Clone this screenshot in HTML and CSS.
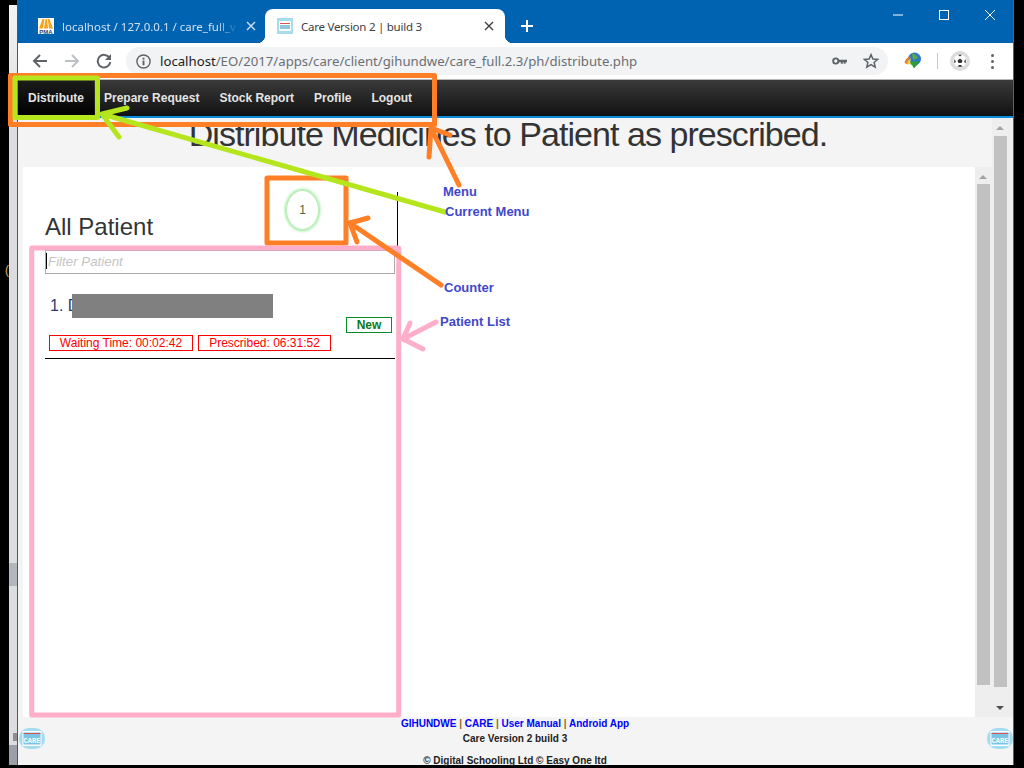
FILE: index.html
```html
<!DOCTYPE html>
<html>
<head>
    <title>Care Version 2 | build 3</title>
    <link rel="stylesheet" href="styles.css">
</head>
<body>
    <div class="desktop">
        <div class="desk-edge">
            <span class="desk-glyph">(</span>
            <div class="edge-strip">
                <div class="edge-block edge-block-a"></div>
                <div class="edge-block edge-block-b"></div>
                <div class="edge-block edge-block-c"></div>
            </div>
        </div>

        <div class="window">
            <div class="tabstrip">
                <div class="tab">
                    <svg class="favicon" viewBox="0 0 16 16">
                        <rect width="16" height="16" fill="#fff"/>
                        <path d="M1 10.5 L4.5 1 L6.5 1 L5 10.5 Z M6 10.5 L7.5 1 L9 1 L10 10.5 Z M11 10.5 L9.8 1 L11.5 1 L15 10.5 Z" fill="#f7a21b"/>
                        <text class="pma-text" x="8" y="15.8">PMA</text>
                    </svg>
                    <span class="tab-title">localhost / 127.0.0.1 / care_full_v</span>
                    <svg class="tab-close" viewBox="0 0 10 10"><path d="M1 1 L9 9 M9 1 L1 9"/></svg>
                </div>
                <div class="tab tab-active">
                    <svg class="favicon" viewBox="0 0 16 16">
                        <rect width="16" height="16" fill="#a6dcec"/>
                        <rect x="2" y="3" width="12" height="10" rx="1" fill="#fff"/>
                        <rect x="3" y="5" width="10" height="1" fill="#d9534f"/>
                        <rect x="3" y="7" width="10" height="4" fill="#8fc6dc"/>
                    </svg>
                    <span class="tab-title">Care Version 2 | build 3</span>
                    <svg class="tab-close" viewBox="0 0 10 10"><path d="M1 1 L9 9 M9 1 L1 9"/></svg>
                </div>
                <svg class="new-tab" viewBox="0 0 12 12"><path d="M6 0 V12 M0 6 H12"/></svg>
                <div class="win-controls">
                    <div class="win-btn"><svg viewBox="0 0 10 10"><path d="M0 5 H10"/></svg></div>
                    <div class="win-btn"><svg viewBox="0 0 10 10"><rect x="0.5" y="0.5" width="9" height="9"/></svg></div>
                    <div class="win-btn"><svg viewBox="0 0 10 10"><path d="M0 0 L10 10 M10 0 L0 10"/></svg></div>
                </div>
            </div>

            <div class="toolbar">
                <div class="tool-btn">
                    <svg viewBox="0 0 16 16"><path class="ico-line" d="M15 8 H2 M8 2 L2 8 L8 14"/></svg>
                </div>
                <div class="tool-btn">
                    <svg viewBox="0 0 16 16"><path class="ico-line ico-off" d="M1 8 H14 M8 2 L14 8 L8 14"/></svg>
                </div>
                <div class="tool-btn">
                    <svg viewBox="0 0 16 16"><path class="ico-line" d="M13.5 5 A6.3 6.3 0 1 0 14.3 9"/><path class="ico-fill" d="M15 1 V7 H9 Z"/></svg>
                </div>
                <div class="omnibox">
                    <svg class="omni-info" viewBox="0 0 16 16">
                        <circle class="ico-line-thin" cx="8" cy="8" r="7"/>
                        <rect class="ico-fill" x="7" y="7" width="2" height="5"/>
                        <rect class="ico-fill" x="7" y="4" width="2" height="2"/>
                    </svg>
                    <span class="url"><span class="url-host">localhost</span>/EO/2017/apps/care/client/gihundwe/care_full.2.3/ph/distribute.php</span>
                    <div class="omni-right">
                        <svg class="omni-key" viewBox="0 0 16 10">
                            <circle class="ico-line-key" cx="4" cy="5" r="2.8"/>
                            <path class="ico-fill" d="M7 3.6 H16 V6.4 H14.5 V8 H12.5 V6.4 H11.5 V8 H9.5 V6.4 H7 Z"/>
                        </svg>
                        <svg class="omni-star" viewBox="0 0 16 16">
                            <path class="ico-line-thin" d="M8 1.6 L9.9 6 L14.7 6.4 L11.1 9.5 L12.2 14.2 L8 11.7 L3.8 14.2 L4.9 9.5 L1.3 6.4 L6.1 6 Z"/>
                        </svg>
                    </div>
                </div>
                <svg class="idm" viewBox="0 0 18 18">
                    <circle cx="10.5" cy="7" r="6.5" fill="#2f76c9"/>
                    <path d="M8 1.5 Q12 2 14 6 L9 8 Z" fill="#5cae3c"/>
                    <path d="M0.5 11 Q1.5 5 7 4.5 Q3 7 4 12.5 Z" fill="#e8832a"/>
                    <path d="M3.5 12 Q3.5 8 7 6 Q5.5 9 7 12.5 Z" fill="#f2d33b"/>
                    <path d="M6 9.5 H16 L10 16.5 Z" fill="#2f9e35"/>
                </svg>
                <div class="tool-sep"></div>
                <svg class="avatar" viewBox="0 0 20 20">
                    <circle cx="10" cy="10" r="10" fill="#dcdcdc"/>
                    <circle cx="10" cy="10" r="6.5" fill="#fff"/>
                    <path d="M10 7.5 L12.5 9.5 L11.5 12 H8.5 L7.5 9.5 Z" fill="#333"/>
                    <path d="M8 3.8 H12 L10 5.5 Z M15.5 8 L16 12 L14 11 Z M4.5 8 L4 12 L6 11 Z M7.5 15.8 L9 14 L11 14 L12.5 15.8 Z" fill="#333"/>
                </svg>
                <div class="tool-dots"><span></span><span></span><span></span></div>
            </div>

            <ul class="nav">
                <li class="nav-active">Distribute</li>
                <li>Prepare Request</li>
                <li>Stock Report</li>
                <li>Profile</li>
                <li>Logout</li>
            </ul>

            <div class="upper">
                <div class="page">
                    <h1>Distribute Medicines to Patient as prescribed.</h1>
                    <div class="panel-row">
                        <div class="panel">
                            <div class="list-col">
                                <div class="list-head">
                                    <h2>All Patient</h2>
                                    <div class="counter">1</div>
                                </div>
                                <div class="filter">Filter Patient</div>
                                <div class="patient">
                                    <div class="patient-name">1. D<span class="redact"></span></div>
                                    <div class="badge-row"><span class="badge-new">New</span></div>
                                    <div class="times">
                                        <span class="time-box time-wait">Waiting Time: 00:02:42</span>
                                        <span class="time-box time-pres">Prescribed: 06:31:52</span>
                                    </div>
                                </div>
                            </div>
                        </div>
                        <div class="scroll scroll-inner">
                            <div class="thumb"></div>
                        </div>
                    </div>
                </div>
                <div class="scroll scroll-outer">
                    <div class="thumb"></div>
                    <div class="arrow-down"></div>
                </div>
            </div>

            <div class="footer">
                <svg class="care-icon" viewBox="0 0 26 21">
                    <rect width="26" height="21" rx="10" fill="#a3dcee"/>
                    <rect x="3.5" y="3" width="19" height="15" fill="#fff"/>
                    <rect x="4.5" y="4.5" width="17" height="12" fill="#7cc4e4"/>
                    <rect x="4.5" y="5" width="17" height="1" fill="#d9534f"/>
                    <text class="care-text" x="13" y="14.8">CARE</text>
                </svg>
                <div class="footer-text">
                    <div class="footer-links"><a>GIHUNDWE</a> | <a>CARE</a> | <a>User Manual</a> | <a>Android App</a></div>
                    <div class="footer-ver">Care Version 2 build 3</div>
                    <div class="footer-copy">© Digital Schooling Ltd © Easy One ltd</div>
                </div>
                <svg class="care-icon" viewBox="0 0 26 21">
                    <rect width="26" height="21" rx="10" fill="#a3dcee"/>
                    <rect x="3.5" y="3" width="19" height="15" fill="#fff"/>
                    <rect x="4.5" y="4.5" width="17" height="12" fill="#7cc4e4"/>
                    <rect x="4.5" y="5" width="17" height="1" fill="#d9534f"/>
                    <text class="care-text" x="13" y="14.8">CARE</text>
                </svg>
            </div>
        </div>

        <!-- paint annotations on top of the screenshot -->
        <svg class="notes" viewBox="0 0 1024 768">
            <rect class="note-orange" x="10.5" y="75.5" width="424" height="49"/>
            <rect class="note-green" x="15" y="78" width="82.5" height="39.5"/>
            <rect class="note-orange" x="267" y="178" width="79" height="65"/>
            <rect class="note-pink" x="31.7" y="248" width="367" height="467"/>
            <path class="note-green" d="M445 212 L102 114 M127 108 L102 114 L119 137"/>
            <path class="note-orange" d="M459 185 L431 128 M450 135 L431 128 L429 157"/>
            <path class="note-orange" d="M441 285 L350 223 M368 218 L350 223 L357 242"/>
            <path class="note-pink" d="M436 322 L403 339 M410 323 L403 339 L423 349"/>
            <text class="note-label" x="443" y="196">Menu</text>
            <text class="note-label" x="445" y="216">Current Menu</text>
            <text class="note-label" x="444" y="292">Counter</text>
            <text class="note-label" x="440" y="326">Patient List</text>
        </svg>
    </div>
</body>
</html>
```

FILE: styles.css
```css
html, body {
    margin: 0;
    padding: 0;
    background: #000;
}
.desktop {
    position: relative;
    display: flex;
    width: 1024px;
    height: 768px;
    overflow: hidden;
    font-family: "Liberation Sans", Arial, sans-serif;
}
.desk-edge {
    position: relative;
    width: 17px;
    flex: none;
    padding: 5px 0 3px 9px;
    box-sizing: border-box;
}
.desk-glyph {
    position: absolute;
    left: 5px;
    top: 263px;
    color: #e0b070;
    font-size: 12px;
    line-height: 14px;
}
.edge-strip {
    position: relative;
    height: 100%;
    background: linear-gradient(#f4f4f4, #dcdde0 120px);
}
.edge-block {
    position: absolute;
    left: 0;
    right: 0;
}
.edge-block-a {
    top: 558px;
    height: 23px;
    background: #b3b6bc;
}
.edge-block-b {
    top: 740px;
    height: 20px;
    background: #9ba0a8;
}
.edge-block-c {
    top: 728px;
    left: 4px;
    height: 8px;
    background: #8e8e8e;
}
.window {
    width: 997px;
    height: 765px;
    flex: none;
    box-sizing: border-box;
    border-left: 1px solid #1468a8;
    border-right: 1px solid #0a78c8;
    display: flex;
    flex-direction: column;
    background: #f4f4f4;
}

/* tabs */
.tabstrip {
    height: 43px;
    flex: none;
    display: flex;
    align-items: flex-end;
    padding-left: 20px;
    background: #0063b1;
}
.tab {
    width: 227px;
    height: 34px;
    box-sizing: border-box;
    display: flex;
    align-items: center;
    gap: 8px;
    padding: 0 9px 0 0;
    color: #cfe1f2;
    font-family: "Noto Sans", sans-serif;
    font-size: 11.5px;
}
.tab-active {
    position: relative;
    width: 240px;
    padding: 0 11px 0 12px;
    background: #fff;
    color: #3c4043;
    border-radius: 8px 8px 0 0;
    letter-spacing: -0.25px;
}
.tab-active::before, .tab-active::after {
    content: "";
    position: absolute;
    bottom: 0;
    width: 8px;
    height: 8px;
}
.tab-active::before {
    left: -8px;
    background: radial-gradient(circle at 0 0, #0063b1 8px, #fff 8.5px);
}
.tab-active::after {
    right: -8px;
    background: radial-gradient(circle at 100% 0, #0063b1 8px, #fff 8.5px);
}
.favicon {
    width: 16px;
    height: 16px;
    flex: none;
}
.pma-text {
    font: bold 6px "Liberation Sans", sans-serif;
    fill: #3a3f6b;
    text-anchor: middle;
}
.tab-title {
    flex: 1;
    overflow: hidden;
    white-space: nowrap;
}
.tab:not(.tab-active) .tab-title {
    -webkit-mask-image: linear-gradient(to right, #000 88%, transparent);
}
.tab-close {
    width: 10px;
    height: 10px;
    flex: none;
    fill: none;
    stroke: currentColor;
    stroke-width: 1.4;
}
.new-tab {
    width: 12px;
    height: 12px;
    flex: none;
    margin: 0 0 11px 16px;
    fill: none;
    stroke: #fff;
    stroke-width: 2;
}
.win-controls {
    display: flex;
    align-self: flex-start;
    margin-left: auto;
}
.win-btn {
    width: 46px;
    height: 30px;
    display: flex;
    align-items: center;
    justify-content: center;
}
.win-btn svg {
    width: 10px;
    height: 10px;
    fill: none;
    stroke: #fff;
    stroke-width: 1;
}

/* toolbar */
.toolbar {
    height: 36px;
    flex: none;
    display: flex;
    align-items: center;
    padding-left: 6px;
    background: #fff;
    border-bottom: 1px solid #b8b8b8;
}
.tool-btn {
    width: 32px;
    display: flex;
    justify-content: center;
}
.tool-btn svg {
    width: 16px;
    height: 16px;
}
.ico-line {
    fill: none;
    stroke: #5f6368;
    stroke-width: 2;
}
.ico-off {
    stroke: #bdc1c6;
}
.ico-fill {
    fill: #5f6368;
}
.ico-line-thin {
    fill: none;
    stroke: #5f6368;
    stroke-width: 1.5;
}
.ico-line-key {
    fill: none;
    stroke: #5f6368;
    stroke-width: 2;
}
.omnibox {
    width: 762px;
    height: 28px;
    flex: none;
    margin-left: 6px;
    display: flex;
    align-items: center;
    box-sizing: border-box;
    padding: 0 9px 0 10px;
    background: #f1f3f4;
    border-radius: 14px;
}
.omni-info {
    width: 15px;
    height: 15px;
    flex: none;
    margin-right: 9px;
}
.url {
    color: #6b6f74;
    font-family: "Noto Sans", sans-serif;
    font-size: 13.2px;
    white-space: nowrap;
}
.url-host {
    color: #202124;
}
.omni-right {
    margin-left: auto;
    display: flex;
    align-items: center;
    gap: 16px;
}
.omni-key {
    width: 15px;
    height: 10px;
}
.omni-star {
    width: 16px;
    height: 16px;
}
.idm {
    width: 18px;
    height: 18px;
    flex: none;
    margin-left: 16px;
}
.tool-sep {
    width: 1px;
    height: 16px;
    flex: none;
    margin-left: 15px;
    background: #c8c8c8;
}
.avatar {
    width: 20px;
    height: 20px;
    flex: none;
    margin-left: 12px;
}
.tool-dots {
    display: flex;
    flex-direction: column;
    gap: 3px;
    margin-left: 21px;
}
.tool-dots span {
    width: 3px;
    height: 3px;
    border-radius: 50%;
    background: #5f6368;
}

/* menu */
.nav {
    height: 36px;
    flex: none;
    margin: 0;
    padding: 0;
    list-style: none;
    display: flex;
    background: linear-gradient(#3a3a3a, #111);
    border-bottom: 2px solid #0a8ddd;
}
.nav li {
    padding: 0 10px;
    line-height: 36px;
    color: #e4e4e4;
    font-size: 12px;
    font-weight: bold;
}
.nav li.nav-active {
    background: linear-gradient(#1c1c1c, #000);
}

/* page */
.upper {
    flex: 1;
    display: flex;
    min-height: 0;
}
.page {
    flex: 1;
    display: flex;
    flex-direction: column;
    min-width: 0;
}
h1 {
    height: 49px;
    flex: none;
    margin: 0;
    padding-left: 6px;
    color: #333;
    font-size: 34px;
    font-weight: normal;
    line-height: 33px;
    letter-spacing: -0.95px;
    text-align: center;
    white-space: nowrap;
}
.panel-row {
    flex: 1;
    display: flex;
    margin-left: 5px;
    min-height: 0;
}
.panel {
    flex: 1;
    padding: 25px 0 0 22px;
    background: #fff;
}
.list-col {
    width: 352px;
    height: 100%;
    border-right: 1px solid #000;
}
.list-head {
    height: 58px;
    display: flex;
    align-items: flex-end;
}
h2 {
    margin: 0 0 10px;
    color: #333;
    font-size: 24px;
    font-weight: normal;
    line-height: 27px;
}
.counter {
    width: 31px;
    height: 38px;
    margin: 0 78px 20px auto;
    border: 1px solid #b4ecb4;
    border-radius: 50%;
    box-shadow: 0 0 3px 1px #8ee88e;
    color: #3f6b3a;
    font-size: 12px;
    line-height: 38px;
    text-align: center;
}
.filter {
    width: 350px;
    height: 24px;
    box-sizing: border-box;
    border: 1px solid #aaa;
    color: #c4c4c4;
    font-size: 13.33px;
    font-style: italic;
    line-height: 22px;
}
.filter::before {
    content: "";
    display: inline-block;
    width: 1px;
    height: 16px;
    margin-right: 1px;
    vertical-align: -3px;
    background: #000;
}
.patient {
    width: 350px;
    box-sizing: border-box;
    padding: 20px 3px 7px 4px;
    border-bottom: 1px solid #000;
}
.patient-name {
    height: 24px;
    padding-left: 1px;
    color: #33367a;
    font-size: 16px;
    line-height: 24px;
    white-space: nowrap;
}
.redact {
    display: inline-block;
    width: 201px;
    height: 24px;
    margin-left: -7px;
    vertical-align: top;
    background: #808080;
}
.badge-row {
    display: flex;
    justify-content: flex-end;
    height: 18px;
    margin-top: -1px;
}
.badge-new {
    width: 46px;
    height: 16px;
    box-sizing: border-box;
    border: 1px solid #0a8a2a;
    color: #0a7a20;
    font-size: 12px;
    font-weight: bold;
    line-height: 14px;
    text-align: center;
}
.times {
    display: flex;
    gap: 5px;
}
.time-box {
    height: 16px;
    box-sizing: border-box;
    border: 1px solid #f00;
    color: #f00;
    font-size: 12px;
    line-height: 14px;
    text-align: center;
}
.time-wait {
    width: 144px;
}
.time-pres {
    width: 133px;
}

/* scrollbars */
.scroll {
    flex: none;
    display: flex;
    flex-direction: column;
    box-sizing: border-box;
    position: relative;
    background: #eee;
}
.scroll-inner {
    width: 17px;
    padding: 17px 2px 0;
}
.scroll-inner .thumb {
    height: 501px;
}
.scroll-outer {
    width: 21px;
    padding: 18px 6px 0 2px;
}
.scroll-outer .thumb {
    height: 551px;
}
.thumb {
    background: #c1c1c1;
}
.scroll::before {
    content: "";
    position: absolute;
    top: 8px;
    left: 4px;
    border-left: 4px solid transparent;
    border-right: 4px solid transparent;
    border-bottom: 4px solid #a3a3a3;
}
.arrow-down {
    width: 0;
    margin: 19px 0 0 2px;
    border-left: 4px solid transparent;
    border-right: 4px solid transparent;
    border-top: 4px solid #505050;
}

/* footer */
.footer {
    height: 48px;
    flex: none;
    display: flex;
    justify-content: space-between;
    padding: 0 0 0 1px;
}
.care-icon {
    width: 26px;
    height: 21px;
    flex: none;
    margin-top: 11px;
}
.care-text {
    font: bold 7px "Liberation Mono", monospace;
    fill: #fff;
    text-anchor: middle;
}
.footer-text {
    margin-left: -2px;
    color: #222;
    font-size: 10px;
    font-weight: bold;
    text-align: center;
}
.footer-links {
    height: 15px;
    line-height: 14px;
    color: #8a6a20;
}
.footer-links a {
    color: #00f;
}
.footer-ver {
    height: 15px;
    line-height: 14px;
}
.footer-copy {
    margin-top: 7px;
    line-height: 14px;
}

/* annotations */
.notes {
    position: absolute;
    left: 0;
    top: 0;
    width: 1024px;
    height: 768px;
    pointer-events: none;
}
.note-orange, .note-green, .note-pink {
    fill: none;
    stroke-width: 5;
    stroke-linecap: round;
    stroke-linejoin: round;
}
.note-orange {
    stroke: #ff7f27;
}
.note-green {
    stroke: #b5e61d;
}
.note-pink {
    stroke: #ffaec9;
}
.note-label {
    fill: #3f48cc;
    font-size: 13px;
    font-weight: bold;
}
```
